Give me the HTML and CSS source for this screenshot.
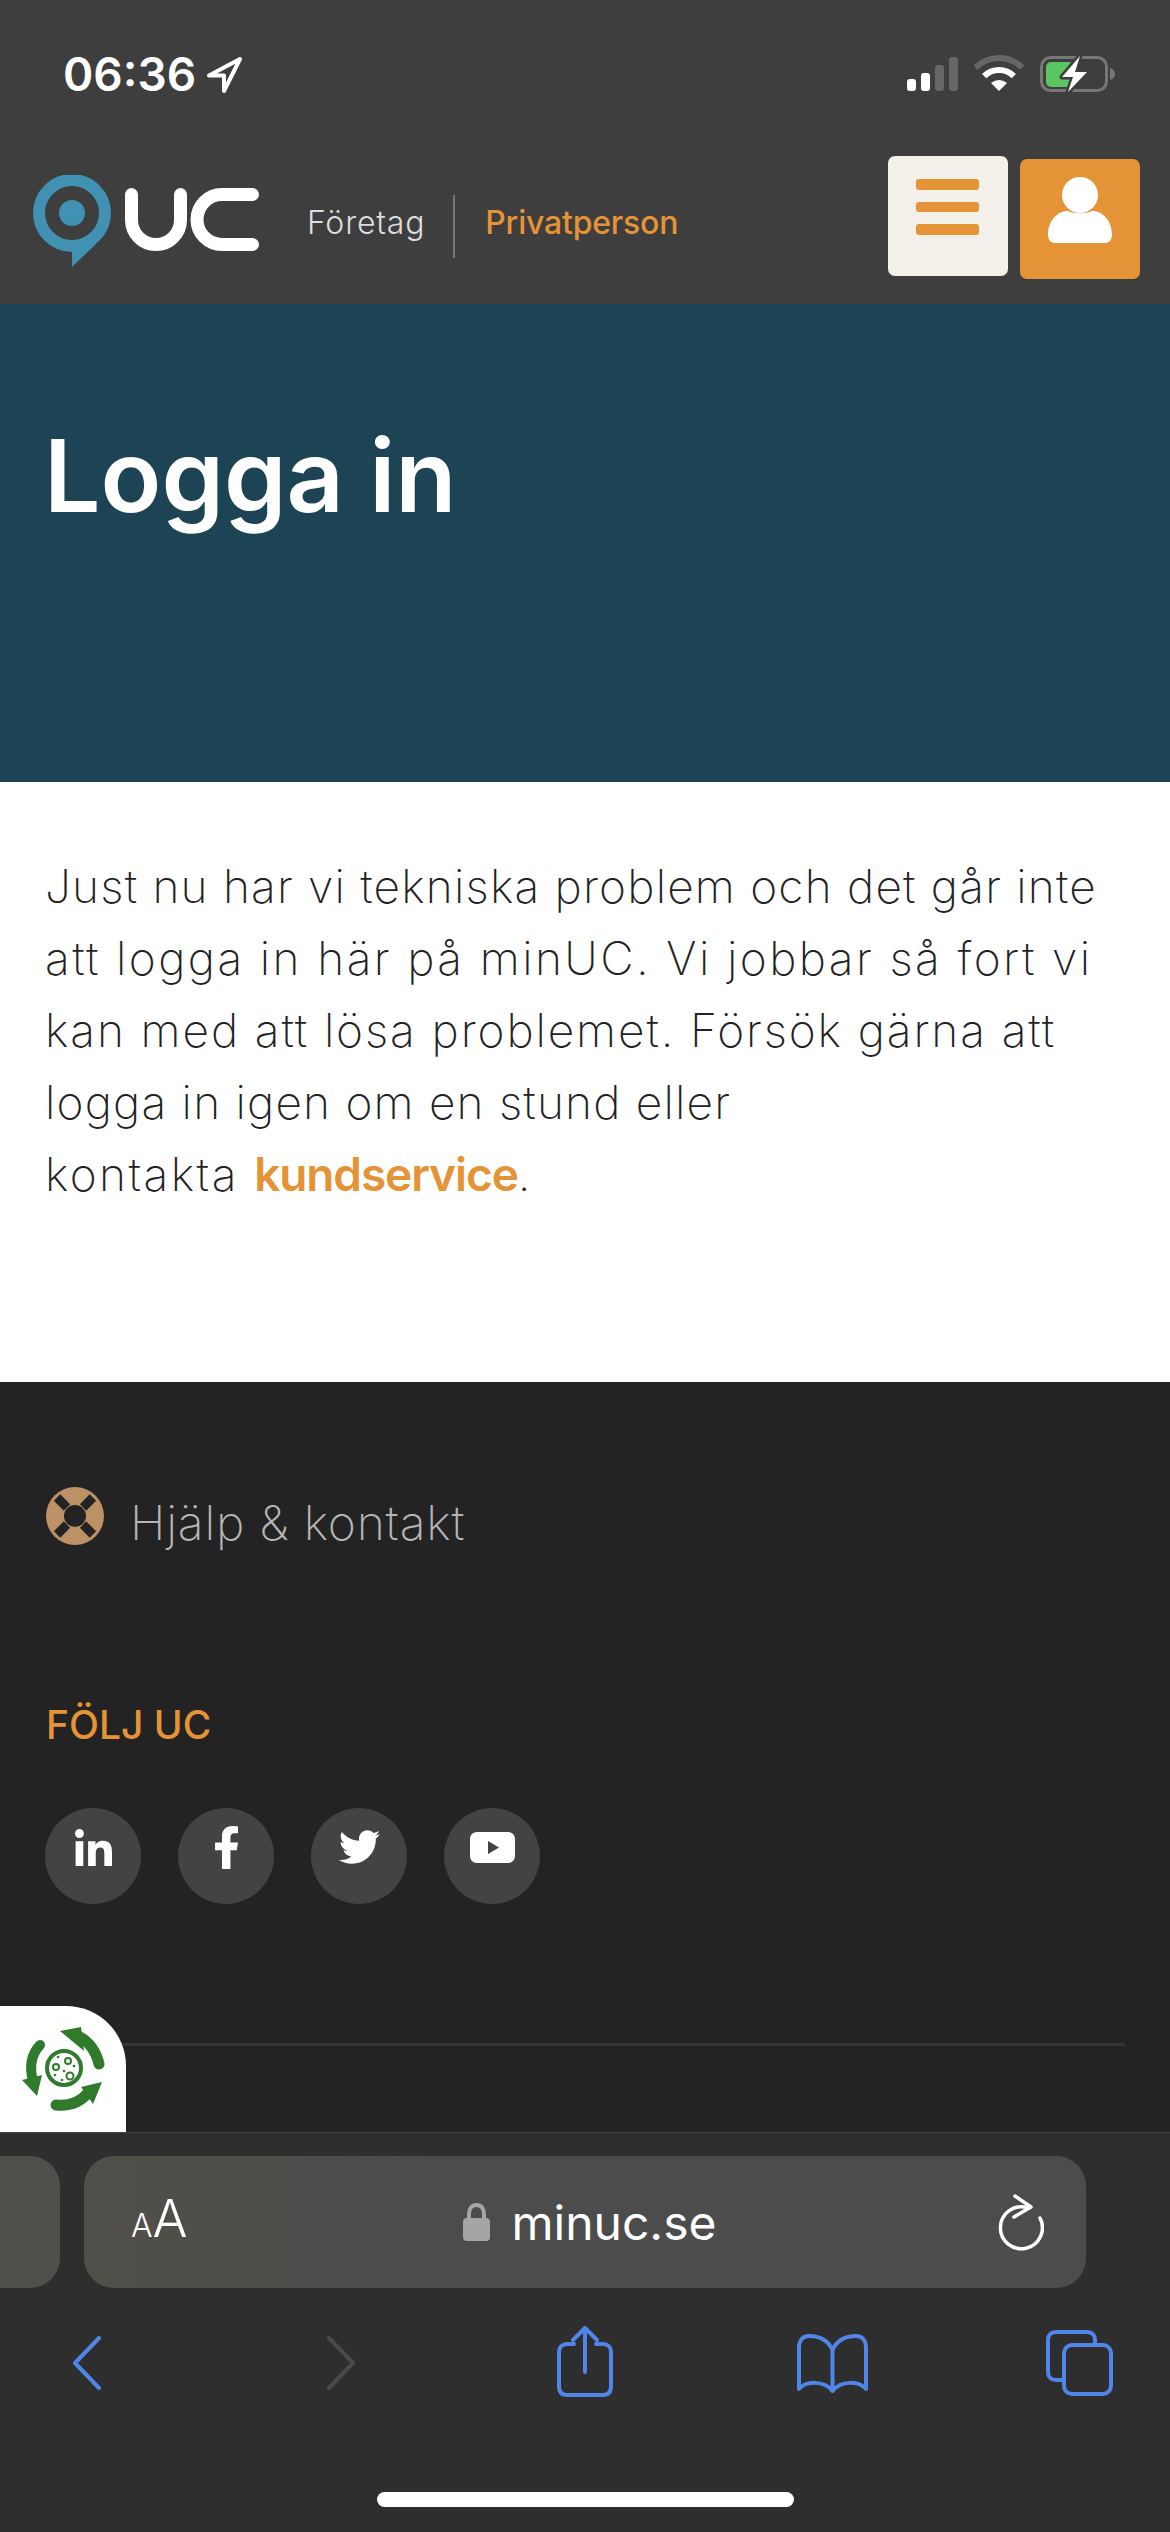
FILE: index.html
```html
<!DOCTYPE html>
<html lang="sv">
<head>
  <meta charset="UTF-8" />
  <meta name="viewport" content="width=device-width, initial-scale=1" />
  <title>Logga in - minUC</title>
  <link rel="stylesheet" href="styles.css">
</head>
<body>
  <header class="top">
    <div class="status">
      <span class="time">06:36</span>
      <svg class="loc" viewBox="207 55 40 40"><path d="M243 59 212 75.500H227V91Z" /></svg>
      <svg class="status-icons" viewBox="905 52 212 44">
        <rect x="907" y="79" width="9" height="12" rx="3" fill="#fff" />
        <rect x="921" y="73" width="9" height="18" rx="3" fill="#fff" />
        <rect x="935" y="65" width="9" height="26" rx="3" fill="#666" />
        <rect x="949" y="57" width="9" height="34" rx="3" fill="#666" />
        <path d="M975.700 67.700A33 33 0 0 1 1022.300 67.700" fill="none" stroke="#666" stroke-width="6" />
        <path d="M984.200 76.200A21 21 0 0 1 1013.800 76.200" fill="none" stroke="#fff" stroke-width="6" />
        <path d="M999 91 991 83Q999 77 1007 83Z" fill="#fff" />
        <rect x="1041.500" y="57.500" width="65" height="33" rx="9" fill="none" stroke="#777" stroke-width="3" />
        <path d="M1110 68c3 1 5 3 5 6s-2 5-5 6Z" fill="#777" />
        <rect x="1046" y="62" width="28" height="25" rx="5" fill="#5ac561" />
        <path d="M1080 56 1062 77H1073L1068 92 1087 72H1075Z" fill="#fff" stroke="#3e3e3e" stroke-width="5" paint-order="stroke" stroke-linejoin="round" />
      </svg>
    </div>
    <nav class="nav">
      <svg class="logo" viewBox="33 175 227 92">
        <circle cx="72" cy="213" r="33" fill="none" stroke="#4191b3" stroke-width="12" />
        <circle cx="72" cy="213" r="13" fill="#4191b3" />
        <path d="M72 248V267L96 244Z" fill="#4191b3" />
        <path d="M131.500 194.500V220a24.500 24.500 0 0 0 49 0V194.500" fill="none" stroke="#fff" stroke-width="13" stroke-linecap="round" />
        <path d="M252.500 194.500H222a25 25 0 0 0 0 50H252.500" fill="none" stroke="#fff" stroke-width="13" stroke-linecap="round" />
      </svg>
      <a class="nav-link" href="#">Företag</a>
      <span class="nav-sep"></span>
      <a class="nav-link active" href="#">Privatperson</a>
      <div class="nav-btns">
        <a class="btn-menu" href="#"><i></i><i></i><i></i></a>
        <a class="btn-user" href="#">
          <svg viewBox="0 0 64 66" class="user-icon">
            <circle cx="32" cy="18" r="18" fill="#fff" />
            <path d="M0 58C0 44 9 34 20 34 26 37 38 37 44 34 55 34 64 44 64 58 64 63 61 66 57 66H7C3 66 0 63 0 58Z" fill="#fff" />
          </svg>
        </a>
      </div>
    </nav>
  </header>

  <section class="hero">
    <h1>Logga in</h1>
  </section>

  <main class="content">
    <p>
      <span class="line l1">Just nu har vi tekniska problem och det går inte</span>
      <span class="line l2">att logga in här på minUC. Vi jobbar så fort vi</span>
      <span class="line l3">kan med att lösa problemet. Försök gärna att</span>
      <span class="line l4">logga in igen om en stund eller</span>
      <span class="line l2">kontakta <a href="#">kundservice</a>.</span>
    </p>
  </main>

  <footer class="foot">
    <a class="help" href="#">
      <svg class="help-icon" viewBox="0 0 58 58">
        <circle cx="29" cy="29" r="29" fill="#bd9166" />
        <circle cx="29" cy="29" r="11" fill="#232323" />
        <g fill="#232323">
          <rect x="9" y="11" width="14" height="9" transform="rotate(45 16 15.500)" />
          <rect x="35" y="11" width="14" height="9" transform="rotate(-45 42 15.500)" />
          <rect x="9" y="38" width="14" height="9" transform="rotate(-45 16 42.500)" />
          <rect x="35" y="38" width="14" height="9" transform="rotate(45 42 42.500)" />
        </g>
      </svg>
      <span class="help-text">Hjälp &amp; kontakt</span>
    </a>
    <h3 class="follow">FÖLJ UC</h3>
    <div class="socials">
      <a class="soc" href="#"><svg class="ic-in" viewBox="0 0 448 448"><path d="M100.280 448H7.400V148.900h92.880zM53.790 108.100C24.090 108.100 0 83.500 0 53.800a53.790 53.790 0 0 1 107.580 0c0 29.700-24.100 54.300-53.790 54.300zM447.900 448h-92.680V302.400c0-34.700-.7-79.200-48.290-79.200-48.290 0-55.690 37.700-55.690 76.700V448h-92.780V148.900h89.080v40.800h1.300c12.400-23.500 42.690-48.300 87.880-48.300 94 0 111.280 61.900 111.280 142.300V448z"/></svg></a>
      <a class="soc" href="#"><svg class="ic-fb" viewBox="22 0 272 512" preserveAspectRatio="none"><path d="M279.140 288l14.220-92.660h-88.910v-60.130c0-25.350 12.420-50.060 52.240-50.060h40.420V6.260S260.430 0 225.360 0c-73.220 0-121.080 44.380-121.080 124.720v70.620H22.890V288h81.390v224h100.170V288z"/></svg></a>
      <a class="soc" href="#"><svg class="ic-tw" viewBox="0 48 512 416"><path d="M459.37 151.716c.325 4.548.325 9.097.325 13.645 0 138.720-105.583 298.558-298.558 298.558-59.452 0-114.680-17.219-161.137-47.106 8.447.974 16.568 1.299 25.340 1.299 49.055 0 94.213-16.568 130.274-44.832-46.132-.975-84.792-31.188-98.112-72.772 6.498.974 12.995 1.624 19.818 1.624 9.421 0 18.843-1.300 27.614-3.573-48.081-9.747-84.143-51.980-84.143-102.985v-1.299c13.969 7.797 30.214 12.670 47.431 13.319-28.264-18.843-46.781-51.005-46.781-87.391 0-19.492 5.197-37.360 14.294-52.954 51.655 63.675 129.300 105.258 216.365 109.807-1.624-7.797-2.599-15.918-2.599-24.040 0-57.828 46.782-104.934 104.934-104.934 30.213 0 57.502 12.670 76.670 33.137 23.715-4.548 46.456-13.320 66.599-25.340-7.798 24.366-24.366 44.833-46.132 57.827 21.117-2.273 41.584-8.122 60.426-16.243-14.292 20.791-32.161 39.308-52.628 54.253z"/></svg></a>
      <a class="soc" href="#"><svg class="ic-yt" viewBox="0 0 45 31"><path fill-rule="evenodd" d="M7 0H38C42 0 45 3 45 7V24C45 28 42 31 38 31H7C3 31 0 28 0 24V7C0 3 3 0 7 0ZM18 9V22L29 15.500Z"/></svg></a>
    </div>
    <hr class="foot-line" />
    <div class="badge">
      <svg viewBox="0 7 126 126">
        <g fill="none" stroke="#2f7a2b" stroke-linecap="round">
          <path d="M76 36Q94 44 99 65" stroke-width="11" />
          <path d="M40 46Q27 60 33 82" stroke-width="10" />
          <path d="M56 106Q76 108 88 94" stroke-width="11" />
          <circle cx="64" cy="69" r="17" stroke-width="4" />
        </g>
        <g fill="#2f7a2b">
          <path d="M60 32 81 28 84 52Z" />
          <path d="M22 81 42 76 37 97Z" />
          <path d="M102 83 93 105 81 88Z" />
        </g>
        <g fill="none" stroke="#2f7a2b" stroke-width="2">
          <circle cx="56" cy="68" r="3" />
          <circle cx="68" cy="62" r="3" />
          <circle cx="70" cy="77" r="3.500" />
        </g>
        <g fill="#2f7a2b">
          <circle cx="58" cy="58" r="1.300" />
          <circle cx="74" cy="67" r="1.300" />
          <circle cx="55" cy="76" r="1.300" />
          <circle cx="62" cy="81" r="1.300" />
          <circle cx="64" cy="72" r="1.300" />
        </g>
      </svg>
    </div>
  </footer>

  <div class="safari">
    <div class="url-row">
      <div class="prev-tab"></div>
      <div class="url-bar">
        <span class="aa"><small>A</small>A</span>
        <div class="url">
          <svg class="lock" viewBox="0 0 27 38"><path fill="none" stroke="#a5a5a7" stroke-width="4" d="M6 18V11C6 5 9 2 13.500 2S21 5 21 11V18" /><rect y="15" width="27" height="23" rx="4" fill="#a5a5a7" /></svg>
          <span>minuc.se</span>
        </div>
        <svg class="reload" viewBox="998 2192 46 58"><path d="M1040 2217A21 21 0 1 1 1027 2206.500M1015 2195 1031 2206 1014 2216" /></svg>
      </div>
    </div>
    <div class="tools">
      <svg class="t-back" viewBox="0 0 30 54"><path d="M27 2 3 27 27 52" /></svg>
      <svg class="t-fwd" viewBox="0 0 30 54"><path d="M3 2 27 27 3 52" /></svg>
      <svg class="t-share" viewBox="0 0 56 71"><path d="M17 18H10C5 18 2 21 2 26V60C2 66 5 69 10 69H46C51 69 54 66 54 60V26C54 21 51 18 46 18H39M28 46V3M16 14 28 2 40 14" /></svg>
      <svg class="t-book" viewBox="0 0 71 59"><path d="M35.500 16C30 4 20 2 12 2 5 2 2 7 2 14V55C9 47 27 46 35.500 57 44 46 62 47 69 55V14C69 7 66 2 59 2 51 2 41 4 35.500 16V57" /></svg>
      <svg class="t-tabs" viewBox="0 0 67 66"><path d="M17 50H10C5 50 2 47 2 42V10C2 5 5 2 10 2H41C46 2 49 5 49 10V15" /><rect x="18" y="15" width="47" height="49" rx="8" /></svg>
    </div>
    <div class="home-bar"></div>
  </div>
</body>
</html>
```

FILE: styles.css
```css
* {
  box-sizing: border-box;
}

body {
  margin: 0;
  width: 1170px;
  height: 2532px;
  overflow: hidden;
  font-family: 'Inter', sans-serif;
  display: flex;
  flex-direction: column;
}

a {
  text-decoration: none;
}

/* Top */
.top {
  height: 304px;
  background: #3e3e3e;
}

.status {
  height: 130px;
  padding: 52px 53px 0 63px;
  display: flex;
  align-items: flex-start;
}

.time {
  font-size: 46px;
  font-weight: 600;
  line-height: 44px;
  color: #fff;
}

.loc {
  width: 40px;
  height: 40px;
  margin: 3px 0 0 8px;
}
.loc path {
  fill: none;
  stroke: #fff;
  stroke-width: 4;
  stroke-linejoin: round;
}

.status-icons {
  width: 212px;
  height: 44px;
  margin-left: auto;
}

.nav {
  height: 174px;
  display: flex;
  align-items: flex-start;
  padding: 0 30px 0 33px;
}

.logo {
  width: 227px;
  height: 92px;
  margin-top: 45px;
}

.nav-link {
  font-size: 32px;
  font-weight: 300;
  letter-spacing: 0.8px;
  line-height: 40px;
  color: #ddd;
  margin: 73px 0 0 47px;
}
.nav-link.active {
  color: #e49436;
  font-weight: 500;
  letter-spacing: -0.2px;
  margin-left: 30px;
}

.nav-sep {
  width: 2px;
  height: 63px;
  background: #777;
  margin: 65px 0 0 28px;
}

.nav-btns {
  margin-left: auto;
  display: flex;
  gap: 12px;
  padding-top: 26px;
}

.btn-menu {
  width: 120px;
  height: 120px;
  background: #f3efe9;
  border-radius: 7px;
  padding: 23px 29px 0 28px;
  display: flex;
  flex-direction: column;
  gap: 12px;
}
.btn-menu i {
  height: 10.500px;
  background: #e49436;
  border-radius: 3px;
}

.btn-user {
  width: 120px;
  height: 120px;
  background: #e49436;
  border-radius: 7px;
  margin-top: 3px;
  padding: 15px 0 0 28px;
}

.user-icon {
  display: block;
  width: 64px;
  height: 72px;
}

/* Hero */
.hero {
  height: 478px;
  background: #1c4455;
  padding: 112px 44px 0;
}
.hero h1 {
  margin: 0;
  font-size: 100px;
  font-weight: 600;
  line-height: 120px;
  color: #fff;
}

/* Text */
.content {
  height: 600px;
  background: #fff;
  padding: 68px 45px 0;
}
.content p {
  margin: 0;
  font-size: 46px;
  font-weight: 250;
  line-height: 72px;
  color: #222;
}
.line {
  display: block;
  white-space: nowrap;
}
.l1 { letter-spacing: 1.2px; }
.l2 { letter-spacing: 2.4px; }
.l3 { letter-spacing: 1.9px; }
.l4 { letter-spacing: 1.2px; }

.content a {
  color: #e49436;
  font-weight: 600;
  letter-spacing: -1.1px;
}

/* Footer */
.foot {
  flex: 1;
  position: relative;
  background: #232323;
  padding: 105px 45px 0 46px;
}

.help {
  display: flex;
  align-items: flex-start;
  gap: 26px;
  font-size: 48px;
  font-weight: 200;
  letter-spacing: 0.8px;
  line-height: 58px;
  color: #b5b5b5;
}

.help-text {
  padding-top: 7px;
}

.help-icon {
  width: 58px;
  height: 58px;
}

.follow {
  margin: 149px 0 0;
  font-size: 39px;
  font-weight: 500;
  line-height: 48px;
  color: #e49436;
}

.socials {
  display: flex;
  gap: 37px;
  margin: 59px 0 0 -1px;
}

.soc {
  width: 96px;
  height: 96px;
  border-radius: 50%;
  background: #434343;
  display: flex;
  align-items: center;
  justify-content: center;
  padding-bottom: 18px;
}
.soc svg {
  fill: #fff;
}

.ic-in { width: 37px; height: 37px; }
.ic-fb { width: 23px; height: 43px; }
.ic-tw { width: 41px; height: 34px; }
.ic-yt { width: 45px; height: 31px; }

.foot-line {
  margin: 139px 0 0;
  border: none;
  height: 3px;
  background: #343434;
}

.badge {
  position: absolute;
  left: 0;
  bottom: 0;
  width: 126px;
  height: 126px;
  background: #fff;
  border-top-right-radius: 60px;
}
.badge svg {
  display: block;
  width: 126px;
  height: 126px;
}

/* Safari bars */
.safari {
  height: 400px;
  background: #2e2e2e;
  border-top: 1px solid #444;
}

.url-row {
  display: flex;
  gap: 24px;
  height: 132px;
  margin-top: 23px;
}

.prev-tab {
  width: 60px;
  background: #504f4b;
  border-radius: 0 30px 30px 0;
}

.url-bar {
  width: 1002px;
  background: linear-gradient(90deg, #514f49, #4c4c4c 35%);
  border-radius: 30px;
  display: flex;
  align-items: center;
  padding: 0 42px 0 47px;
}

.aa {
  font-size: 52px;
  font-weight: 300;
  line-height: 50px;
  color: #fff;
  width: 58px;
  white-space: nowrap;
}
.aa small {
  font-size: 32px;
}

.url {
  flex: 1;
  display: flex;
  align-items: center;
  justify-content: center;
  gap: 22px;
  font-size: 48px;
  padding-right: 8px;
  color: #fff;
}

.lock {
  width: 27px;
  height: 38px;
}

.reload {
  width: 46px;
  height: 58px;
}
.reload path {
  fill: none;
  stroke: #fff;
  stroke-width: 3.500;
  stroke-linecap: round;
  stroke-linejoin: round;
}

.tools {
  display: flex;
  align-items: flex-start;
  margin-top: 38px;
  height: 71px;
}
.tools svg {
  fill: none;
  stroke: #4f86e7;
  stroke-width: 4;
  stroke-linecap: round;
  stroke-linejoin: round;
}

.t-back { width: 30px; height: 54px; margin: 10px 0 0 72px; }
.t-fwd { width: 30px; height: 54px; margin: 10px 0 0 224px; }
.tools .t-fwd { stroke: #4a4a4a; }
.t-share { width: 56px; height: 71px; margin-left: 201px; }
.t-book { width: 71px; height: 59px; margin: 8px 0 0 184px; }
.t-tabs { width: 67px; height: 66px; margin: 4px 0 0 178px; }

.home-bar {
  width: 417px;
  height: 15px;
  background: #fff;
  border-radius: 8px;
  margin: 95px auto 0;
}
```
